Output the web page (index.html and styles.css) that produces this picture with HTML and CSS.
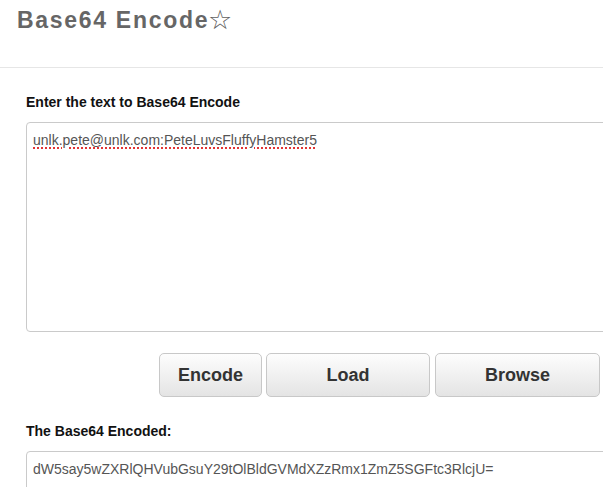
FILE: index.html
```html
<!DOCTYPE html>
<html lang="en">
<head>
  <meta charset="UTF-8"/>
  <title>Base64 Encode</title>
  <link rel="stylesheet" href="styles.css">
</head>
<body>

  <!-- header -->
  <header class="page-head">
    <h1 class="title">Base64 Encode<span class="star">&#9734;</span></h1>
  </header>

  <main class="tool">
    <label class="field-label">Enter the text to Base64 Encode</label>
    <div class="input-box"><span class="misspelled">unlk.pete@unlk.com:PeteLuvsFluffyHamster5</span></div>

    <div class="actions">
      <button class="btn btn-encode">Encode</button>
      <button class="btn btn-load">Load</button>
      <button class="btn btn-browse">Browse</button>
    </div>

    <label class="field-label">The Base64 Encoded:</label>
    <div class="output-box">dW5say5wZXRlQHVubGsuY29tOlBldGVMdXZzRmx1ZmZ5SGFtc3RlcjU=</div>
  </main>

</body>
</html>
```

FILE: styles.css
```css
* {
  margin: 0; padding: 0;
  box-sizing: border-box;
}

body {
  font-family: "Liberation Sans", Arial, sans-serif;
  background: #fff;
  color: #111;
  overflow: hidden;
  width: 603px;
  height: 487px;
}

.page-head {
  height: 68px;
  border-bottom: 1px solid #e6e6e6;
  padding: 6px 0 0 17px;
}

.title {
  font-size: 23px;
  font-weight: bold;
  letter-spacing: 1.7px;
  color: #666;
  line-height: 28px;
  display: flex;
  align-items: center;
}

.star {
  font-weight: normal;
  font-size: 27px;
  letter-spacing: 0;
  color: #5f5f5f;
  margin-left: -1px;
}

.tool {
  padding: 26px 0 0 26px;
  width: 640px;
}

.field-label {
  display: block;
  font-size: 14px;
  font-weight: bold;
  color: #111;
  line-height: 16px;
  margin-bottom: 12px;
}

.input-box,
.output-box {
  border: 1px solid #cacaca;
  border-radius: 4px;
  font-size: 14px;
  color: #555;
  padding: 8px 6px;
  line-height: 18px;
}

.input-box {
  height: 210px;
}

.output-box {
  height: 60px;
}

.misspelled {
  text-decoration: underline dotted #e23434;
  text-decoration-thickness: 2px;
  text-underline-offset: 2px;
}

.actions {
  display: flex;
  gap: 4px;
  margin: 21px 0 26px 133px;
}

.btn {
  height: 44px;
  border: 1px solid #c8c8c8;
  border-radius: 5px;
  background: linear-gradient(to bottom, #fdfdfd, #e4e4e4);
  font-family: inherit;
  font-size: 18px;
  font-weight: bold;
  color: #333;
}

.btn-encode { width: 103px; }
.btn-load { width: 164px; }
.btn-browse { width: 165px; margin-left: 1px; }
```
